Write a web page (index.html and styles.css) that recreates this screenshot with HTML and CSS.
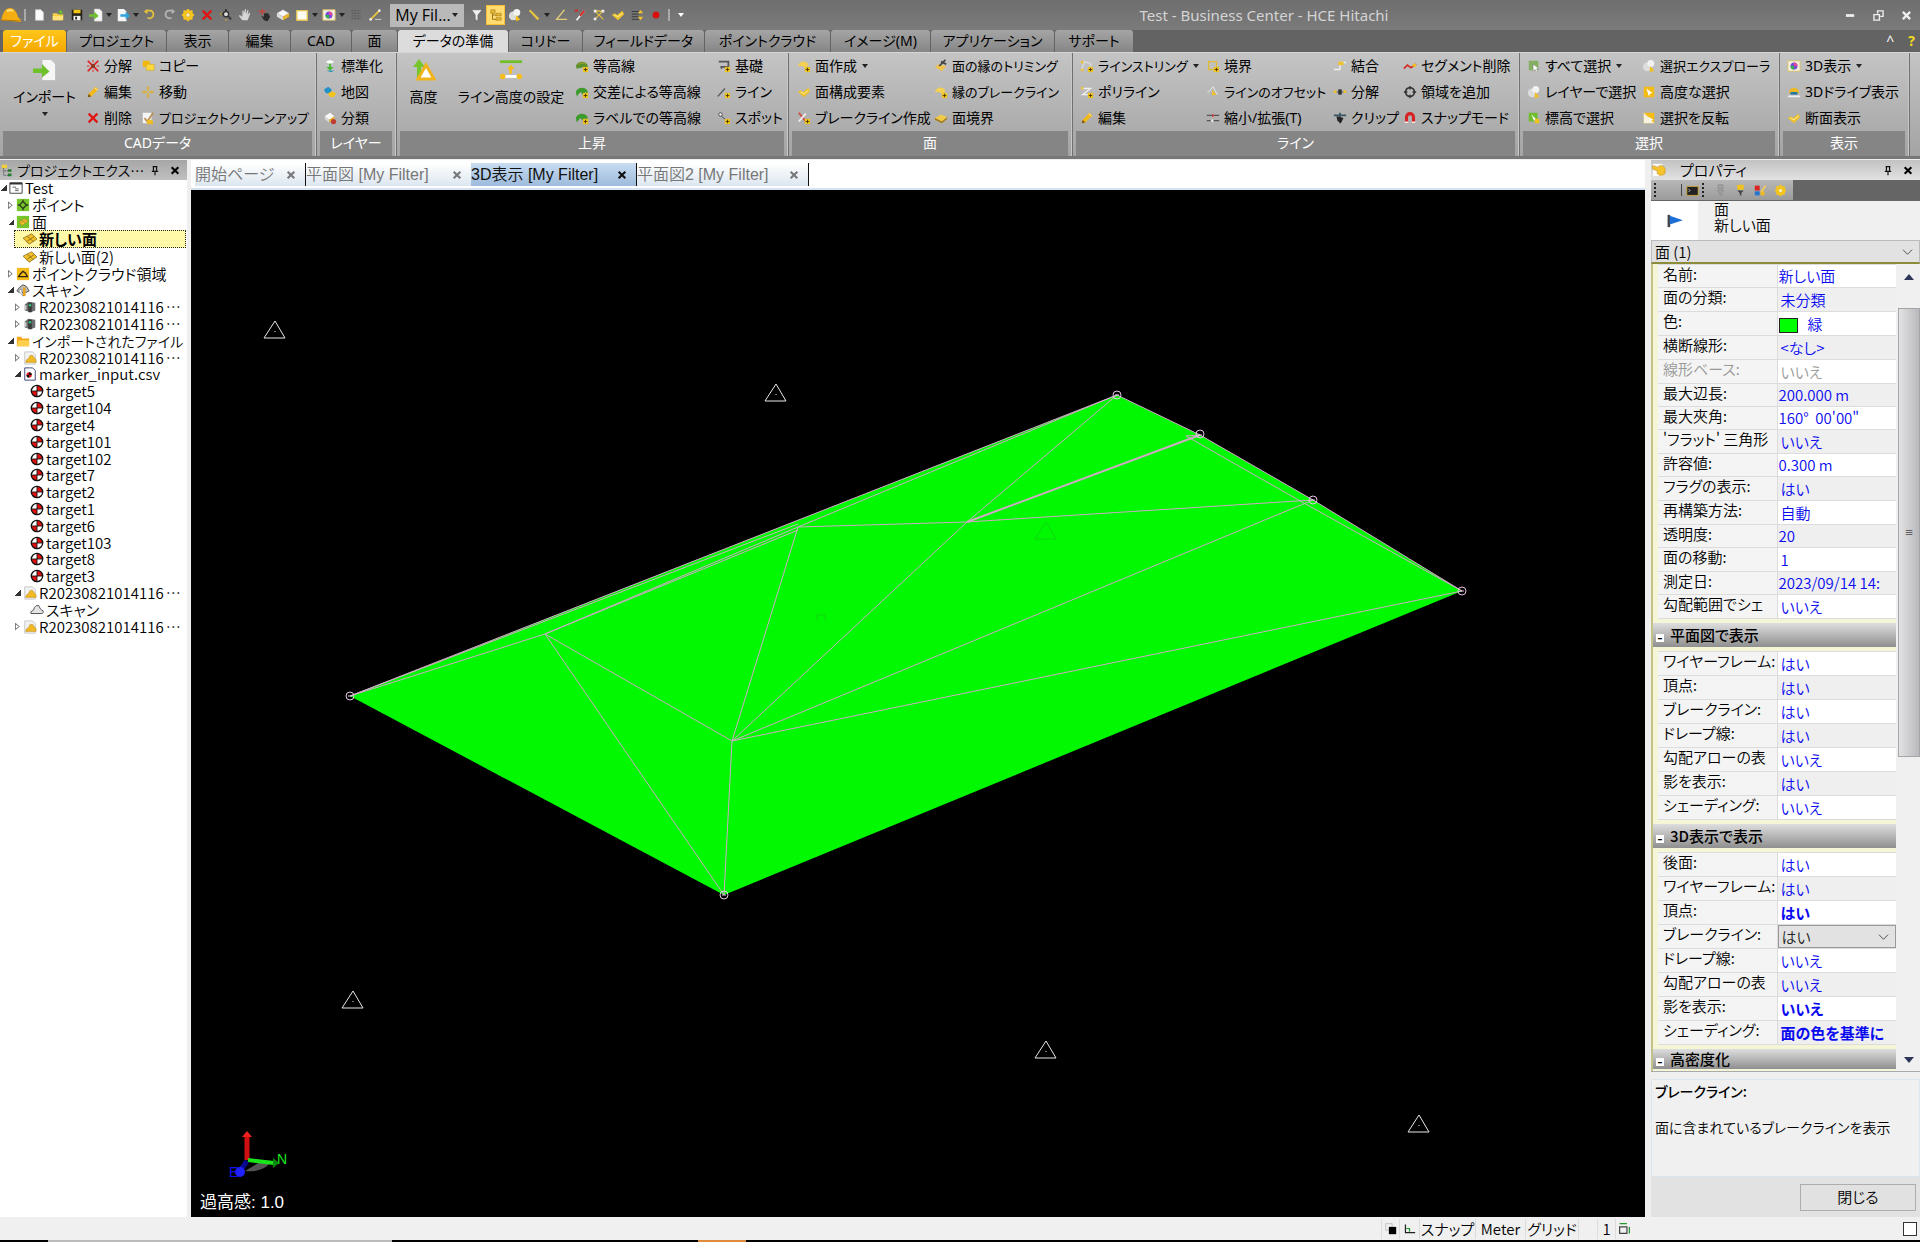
FILE: index.html
```html
<!DOCTYPE html>
<html lang="ja">
<head>
  <meta charset="UTF-8" />
  <meta name="viewport" content="width=device-width, initial-scale=1.0" />
  <title>Test - Business Center - HCE Hitachi</title>
  <link rel="stylesheet" href="styles.css">
</head>
<body>
  <svg class="sprite" aria-hidden="true">
    <symbol id="helmet" viewBox="0 0 20 14"><path d="M1 10C2 4 5 0 9 0s7 4 8 9l3 3v2L0 12z" fill="#f5ae12"/><path d="M6 3c2-1 4-1 6 0" stroke="#ffe07a" stroke-width="2" fill="none"/><path d="M0 12l20 1" stroke="#b97900"/></symbol>
    <symbol id="new" viewBox="0 0 16 16"><path d="M4 2h6l3 3v9H4z" fill="#fafafa" stroke="#ccc"/></symbol>
    <symbol id="open" viewBox="0 0 16 16"><path d="M2 6h5l1 1h6v7H2z" fill="#f6cf45"/><path d="M2 9h12l-1 5H2z" fill="#ffe27a"/><path d="M8 5l3-3 3 3h-2v3h-2V5z" fill="#6bbf2a"/></symbol>
    <symbol id="save" viewBox="0 0 16 16"><path d="M2 2h12v12H2z" fill="#26231c"/><path d="M4 2h8v4H4z" fill="#f3c614"/><path d="M4 9h8v5H4z" fill="#eee"/><path d="M6 10h2v3H6z" fill="#222"/></symbol>
    <symbol id="import" viewBox="0 0 16 16"><path d="M6 1h6l3 3v11H6z" fill="#f6f6f6" stroke="#bbb" stroke-width=".5"/><path d="M0 7h6V4l5 5-5 4v-3H0z" fill="#6fc12b"/></symbol>
    <symbol id="export" viewBox="0 0 16 16"><path d="M2 1h7l3 3v11H2z" fill="#f6f6f6"/><path d="M5 7h6V4l5 5-5 4v-3H5z" fill="#2fa3dd"/></symbol>
    <symbol id="undo" viewBox="0 0 16 16"><path d="M3 3h6a4.500 4.500 0 1 1-4 8" fill="none" stroke="#e6c13c" stroke-width="2"/><path d="M1 4l4-3v6z" fill="#e6c13c"/></symbol>
    <symbol id="redo" viewBox="0 0 16 16"><path d="M13 3H7a4.500 4.500 0 1 0 4 8" fill="none" stroke="#b4b4b4" stroke-width="2"/><path d="M15 4l-4-3v6z" fill="#b4b4b4"/></symbol>
    <symbol id="gear" viewBox="0 0 16 16"><circle cx="8" cy="8" r="4" fill="none" stroke="#f5c51d" stroke-width="4"/><path d="M8 1v3M8 12v3M1 8h3M12 8h3M3 3l2 2M11 11l2 2M13 3l-2 2M3 13l2-2" stroke="#f5c51d" stroke-width="2"/><circle cx="8" cy="8" r="2" fill="#fff3b5"/></symbol>
    <symbol id="cross" viewBox="0 0 16 16"><path d="M3 3l10 10M13 3L3 13" stroke="#e11313" stroke-width="2.500"/></symbol>
    <symbol id="zoomsel" viewBox="0 0 16 16"><circle cx="8" cy="7" r="3" fill="#ddd" stroke="#333" stroke-width="1.500"/><path d="M10 9l4 4M2 7h3M8 1v3" stroke="#333" stroke-width="2"/><path d="M3 8l-2-1 2-2M7 13l1 2 1-2" fill="#f5c51d"/></symbol>
    <symbol id="hand" viewBox="0 0 16 16"><path d="M5 14l-4-5 1-1 3 2V3h1.500v4L8 1h1v6l2-5 1 1-1 5 2-3 1 1-3 8z" fill="#d6d6d6"/></symbol>
    <symbol id="orbit" viewBox="0 0 16 16"><path d="M2 4h8M6 1v7" stroke="#c9423a" stroke-width="1.500"/><path d="M8 14l-3-5 3 1V6h5l2 4-3 5z" fill="#2c2c2c"/></symbol>
    <symbol id="layer" viewBox="0 0 16 16"><path d="M8 2l7 4-7 4-7-4z" fill="#f8f8f8" stroke="#aaa" stroke-width=".5"/><path d="M1 6l7 4v4l-7-4z" fill="#ddd"/><path d="M15 6v4l-7 4v-4z" fill="#eab526"/></symbol>
    <symbol id="viewbox" viewBox="0 0 16 16"><path d="M2 3h12v11H2z" fill="#fdfdf4" stroke="#e0c352" stroke-width="1.500"/></symbol>
    <symbol id="view3d" viewBox="0 0 16 16"><path d="M1 2h14v12H1z" fill="#f3efdf" stroke="#d8bf66"/><circle cx="8" cy="8" r="4" fill="#7a4bd6"/><path d="M8 4a4 4 0 0 1 4 4H8z" fill="#e04b9a"/><path d="M8 12a4 4 0 0 1-4-4h4z" fill="#30b34a"/></symbol>
    <symbol id="grid" viewBox="0 0 16 16"><path d="M3 3h10M3 6h10M3 9h10M3 12h10" stroke="#5c5c5c" stroke-width="1.500" stroke-dasharray="2 1"/></symbol>
    <symbol id="measure" viewBox="0 0 16 16"><path d="M3 13L13 3" stroke="#e9c73d" stroke-width="2"/><path d="M8 13h7" stroke="#ddd"/><circle cx="3" cy="13" r="1.500" fill="#eee"/><circle cx="13" cy="3" r="1.500" fill="#eee"/></symbol>
    <symbol id="funnel" viewBox="0 0 16 16"><path d="M2 2h12L9 8v7l-3-2V8z" fill="#eee" stroke="#444" stroke-width=".5"/></symbol>
    <symbol id="tree" viewBox="0 0 16 16"><path d="M2 2h5v4H2zM8 6h6v3H8zM8 11h6v3H8z" fill="#e5b631" stroke="#8b6a12" stroke-width=".5"/><path d="M4 6v7h4M4 8h4" fill="none" stroke="#8b6a12"/></symbol>
    <symbol id="pick" viewBox="0 0 16 16"><circle cx="6" cy="9" r="5" fill="#ddd"/><circle cx="10" cy="5" r="4" fill="#f2f2f2"/><path d="M9 8l5 5-2 1-3 1z" fill="#f2c01c"/></symbol>
    <symbol id="pencil" viewBox="0 0 16 16"><path d="M2 14l1-4 8-8 3 3-8 8z" fill="#f3b81b"/><path d="M2 14l1-4 3 3z" fill="#7b5518"/><path d="M10 3l3 3" stroke="#fff0b0"/></symbol>
    <symbol id="ruler" viewBox="0 0 16 16"><path d="M2 3l2-1 10 10-2 2z" fill="#e9c63e"/></symbol>
    <symbol id="angle" viewBox="0 0 16 16"><path d="M12 2L3 13h12" fill="none" stroke="#e2cc78" stroke-width="1.500"/></symbol>
    <symbol id="redline" viewBox="0 0 16 16"><path d="M4 14L13 3" stroke="#f2f2f2" stroke-width="2"/><path d="M8 9l5-6M2 3h4" stroke="#d22" stroke-width="2"/></symbol>
    <symbol id="nodes" viewBox="0 0 16 16"><path d="M3 3l10 10M13 3L3 13M4 3l8 1" stroke="#e0c040" stroke-width="1.500"/><path d="M2 2h3v3H2zM11 2h3v3h-3zM2 11h3v3H2z" fill="#eee"/></symbol>
    <symbol id="plane" viewBox="0 0 16 16"><path d="M1 8l3-2 3 2 6-5 2 4-7 7z" fill="#edc22c"/><path d="M4 8l4 2 5-4" stroke="#fff1a9" fill="none"/></symbol>
    <symbol id="listico" viewBox="0 0 16 16"><path d="M2 4h8M2 7h8M2 10h8M2 13h8" stroke="#333"/><path d="M12 2l3 4h-6zM12 14l3-4h-6z" fill="#edc22c"/></symbol>
    <symbol id="rec" viewBox="0 0 16 16"><circle cx="8" cy="8" r="4" fill="#d80f0f"/></symbol>
    <symbol id="burst" viewBox="0 0 16 16"><path d="M2 2l12 12M14 2L2 14" stroke="#df1b1b" stroke-width="2"/><path d="M8 1v14M1 8h14" stroke="#df1b1b" stroke-dasharray="3 8"/><circle cx="8" cy="8" r="2.500" fill="#8a3a20"/></symbol>
    <symbol id="copy" viewBox="0 0 16 16"><path d="M2 2h8v7H2z" fill="#f0b80e"/><path d="M6 6h9v7H6z" fill="#ffd93c" stroke="#c99710" stroke-width=".5"/></symbol>
    <symbol id="move" viewBox="0 0 16 16"><path d="M8 2v12M2 8h12" stroke="#e4b32a" stroke-width="1.500" stroke-dasharray="5 2"/><path d="M6 4l2-3 2 3zM6 12l2 3 2-3zM4 6L1 8l3 2zM12 6l3 2-3 2z" fill="#d9ae39"/></symbol>
    <symbol id="clean" viewBox="0 0 16 16"><path d="M2 2h10v12H2z" fill="#f5f5f5"/><path d="M4 8l3 4 7-10" stroke="#b98f57" stroke-width="2" fill="none"/><path d="M7 10h6l1 5H7z" fill="#efbd28"/></symbol>
    <symbol id="std" viewBox="0 0 16 16"><path d="M3 3l5-2 5 2-5 3z" fill="#fff"/><path d="M7 5h2v4h3l-4 4-4-4h3z" fill="#47b52b"/><path d="M4 13h9l-4 2z" fill="#1d98b4"/></symbol>
    <symbol id="map" viewBox="0 0 16 16"><path d="M1 5l5-3 4 3-2 5-5-1z" fill="#2492c9"/><path d="M6 9l5-2 4 3-3 4-5-1z" fill="#f2c21d"/></symbol>
    <symbol id="class" viewBox="0 0 16 16"><path d="M2 6l6-4 5 4-6 4z" fill="#fafafa"/><path d="M2 6l5 4v3L2 9z" fill="#d8d8d8"/><path d="M7 10l6-4v3l-6 4z" fill="#e3b42e"/><circle cx="12" cy="12" r="3" fill="#bd3b33"/></symbol>
    <symbol id="elev" viewBox="0 0 24 24"><path d="M7 1l6 8H9v10H5V9H1z" fill="#76c52b"/><path d="M14 7l8 14H6z" fill="#fff" stroke="#f0b31c" stroke-width="3"/></symbol>
    <symbol id="lineelev" viewBox="0 0 26 24"><path d="M1 3h24" stroke="#72bf2a" stroke-width="3"/><path d="M13 6l4 5h-3v5h-3v-5H9z" fill="#f6bc1e"/><path d="M4 19h18" stroke="#fff" stroke-width="3"/><circle cx="4" cy="19" r="3" fill="#f6bc1e"/><circle cx="22" cy="19" r="3" fill="#f6bc1e"/></symbol>
    <symbol id="contour" viewBox="0 0 16 16"><path d="M1 8c1-5 9-7 13-2l1 5-4-2-4 1-5 1z" fill="#58912b"/><path d="M3 7c3-3 7-3 9-1" stroke="#c0a23a" fill="none"/><path d="M9 9h6v6H9z" fill="#f0c31c"/><path d="M12 10v4M10 12h4" stroke="#463508"/></symbol>
    <symbol id="contour2" viewBox="0 0 16 16"><path d="M1 8c1-5 9-7 13-2l1 5-3-3-3 3-3-3-4 5z" fill="#3c9a2a"/><path d="M9 9h6v6H9z" fill="#f0c31c"/><path d="M12 10v4M10 12h4" stroke="#463508"/></symbol>
    <symbol id="base" viewBox="0 0 16 16"><path d="M2 3h11v6H5v2" fill="none" stroke="#555" stroke-width="2"/><path d="M9 9h6v6H9z" fill="#f0c31c"/><path d="M12 10v4M10 12h4" stroke="#463508"/></symbol>
    <symbol id="lineadd" viewBox="0 0 16 16"><path d="M1 13l8-9" stroke="#555" stroke-width="1.500"/><path d="M9 9h6v6H9z" fill="#f0c31c"/><path d="M12 10v4M10 12h4" stroke="#463508"/></symbol>
    <symbol id="spot" viewBox="0 0 16 16"><circle cx="4" cy="4" r="2" fill="#eee" stroke="#444"/><path d="M5 6l5 4" stroke="#444"/><path d="M9 9h6v6H9z" fill="#f0c31c"/><path d="M12 10v4M10 12h4" stroke="#463508"/></symbol>
    <symbol id="surfadd" viewBox="0 0 16 16"><path d="M1 8c2-6 8-7 12-2l-3 5-4-3z" fill="#f3cf52"/><path d="M9 9h6v6H9z" fill="#f0c31c"/><path d="M12 10v4M10 12h4" stroke="#463508"/></symbol>
    <symbol id="brk" viewBox="0 0 16 16"><path d="M2 2l9 11" stroke="#d24b40" stroke-width="2"/><path d="M2 12l8-9" stroke="#f2f2f2" stroke-width="2"/><path d="M9 9h6v6H9z" fill="#f0c31c"/><path d="M12 10v4M10 12h4" stroke="#463508"/></symbol>
    <symbol id="trim" viewBox="0 0 16 16"><path d="M1 9l4-3 9 2-5 6z" fill="#edc24d"/><path d="M6 8l7-7M8 3l6 3" stroke="#444" stroke-width="2"/></symbol>
    <symbol id="slab" viewBox="0 0 16 16"><path d="M1 8l7-4 7 3-6 5z" fill="#f0cb45"/><path d="M1 8l8 4 6-5v2l-6 5-8-4z" fill="#a37c14"/></symbol>
    <symbol id="linestr" viewBox="0 0 16 16"><path d="M2 12l3-9 7 2v6" fill="none" stroke="#ddd" stroke-width="1.500"/><path d="M1 2h3v3H1zM1 11h3v3H1z" fill="#e9c340"/><path d="M9 9h6v6H9z" fill="#f0c31c"/><path d="M12 10v4M10 12h4" stroke="#463508"/></symbol>
    <symbol id="polyl" viewBox="0 0 16 16"><path d="M2 4h10L3 11h7" fill="none" stroke="#eee" stroke-width="1.500"/><path d="M1 2h3v3H1z" fill="#e9c340"/><path d="M9 9h6v6H9z" fill="#f0c31c"/><path d="M12 10v4M10 12h4" stroke="#463508"/></symbol>
    <symbol id="bound" viewBox="0 0 16 16"><path d="M3 3h9v9H3z" fill="none" stroke="#e0bb38" stroke-width="1.500"/><path d="M9 9h6v6H9z" fill="#f0c31c"/><path d="M12 10v4M10 12h4" stroke="#463508"/></symbol>
    <symbol id="offset" viewBox="0 0 16 16"><path d="M2 9l6-7 5 9" fill="none" stroke="#eee"/><path d="M7 5l5 6-5 1z" fill="#edc22c"/></symbol>
    <symbol id="scale" viewBox="0 0 16 16"><path d="M1 5h6M9 5h6M1 11h6M9 11h6" stroke="#555" stroke-width="1.500"/><path d="M7 3l3 2-3 2z" fill="#c33"/><path d="M8 9l-3 2 3 2z" fill="#eee"/></symbol>
    <symbol id="join" viewBox="0 0 16 16"><path d="M1 12h7V4h7" fill="none" stroke="#eee" stroke-width="1.500"/><path d="M6 3h6v4H6z" fill="#edc22c"/></symbol>
    <symbol id="explode" viewBox="0 0 16 16"><path d="M1 8h14" stroke="#777" stroke-width="1.500"/><path d="M6 5h4v6H6z" fill="#333"/><path d="M1 6h3v3H1zM12 6h3v3h-3z" fill="#edc22c"/></symbol>
    <symbol id="clip" viewBox="0 0 16 16"><path d="M1 5h14M8 2v12" stroke="#3a5560" stroke-width="2"/><path d="M4 6l8 2-3 6-4-3z" fill="#222"/></symbol>
    <symbol id="segdel" viewBox="0 0 16 16"><path d="M1 11l4-4 4 3 6-4" fill="none" stroke="#d4302a" stroke-width="2"/><circle cx="13" cy="7" r="2" fill="#f0c31c"/></symbol>
    <symbol id="region" viewBox="0 0 16 16"><circle cx="8" cy="8" r="5" fill="none" stroke="#333" stroke-width="2"/><path d="M8 1v4M8 11v4M1 8h4M11 8h4" stroke="#333" stroke-width="1.500"/></symbol>
    <symbol id="magnet" viewBox="0 0 16 16"><path d="M4 14V7a4 4 0 0 1 8 0v7" fill="none" stroke="#d62222" stroke-width="3.500"/><path d="M2 12h4v2H2zM10 12h4v2h-4z" fill="#eee"/></symbol>
    <symbol id="selall" viewBox="0 0 16 16"><path d="M2 2h11v11H2z" fill="#86b061"/><path d="M7 6v8l2-2 2 3 1-1-1-3h3z" fill="#fff" stroke="#777" stroke-width=".5"/></symbol>
    <symbol id="selgreen" viewBox="0 0 16 16"><path d="M2 2h10v10H2z" fill="#6fbc2f"/><path d="M5 4l6 6-3 1z" fill="#fff"/><path d="M9 9h5v5H9z" fill="#f0c31c"/></symbol>
    <symbol id="seladv" viewBox="0 0 16 16"><path d="M2 2h12v12H2z" fill="#f3bd16"/><path d="M5 4l7 5-3 1-1 3z" fill="#fff"/></symbol>
    <symbol id="selinv" viewBox="0 0 16 16"><path d="M2 2h12v12H2z" fill="#f3bd16"/><path d="M2 14V2l12 12z" fill="#f7f2df"/><path d="M6 6l7 4-3 1z" fill="#fff"/></symbol>
    <symbol id="drive" viewBox="0 0 16 16"><path d="M3 6c1-4 9-4 10 0l1 3H2z" fill="#edb927"/><path d="M4 8h8v3H4z" fill="#2677a0"/><path d="M1 13h14" stroke="#eee" stroke-width="2"/></symbol>
    <symbol id="explorer" viewBox="0 0 16 16"><path d="M1 2h6v4H1z" fill="#f2cd3c"/><path d="M3 6v8h5M3 9h5" stroke="#333" fill="none" stroke-dasharray="1 1"/><path d="M8 7h4v3H8zM8 12h4v3H8z" fill="#267a2c"/></symbol>
    <symbol id="proj" viewBox="0 0 16 16"><path d="M1 2h14v12H1z" fill="#fff" stroke="#333"/><path d="M1 2h14v2H1z" fill="#333"/><path d="M4 7h4M7 9h4M7 11h4" stroke="#555"/></symbol>
    <symbol id="point" viewBox="0 0 16 16"><path d="M1 1h14v14H1z" fill="#76c52b"/><path d="M8 4l4 4-4 4-4-4zM8 2v3M8 11v3M2 8h3M11 8h3" fill="none" stroke="#2c3b1c" stroke-width="1.500"/></symbol>
    <symbol id="surfg" viewBox="0 0 16 16"><path d="M1 1h14v14H1z" fill="#76c52b"/><path d="M3 8l7-4 4 3-7 5z" fill="#f2c22f" stroke="#8d6b12" stroke-width=".5"/><path d="M6 6l5 3M5 9l6-3" stroke="#8d6b12" stroke-width=".5"/></symbol>
    <symbol id="surf" viewBox="0 0 16 16"><path d="M0 7l10-5 6 6-9 6z" fill="#f0c02c" stroke="#7e6012" stroke-width=".8"/><path d="M5 5l7 6M4 11l9-6" stroke="#7e6012" stroke-width=".8"/></symbol>
    <symbol id="pcr" viewBox="0 0 16 16"><path d="M1 1h14v14H1z" fill="#f5bd1b"/><path d="M3 11l2-3 3-3 3 2 2 4z" fill="none" stroke="#2c2410" stroke-width="1.500"/></symbol>
    <symbol id="cloudscan" viewBox="0 0 16 16"><path d="M1 9l3-4 4-3 4 2 3 5-4 2H4z" fill="#bdbdbd" stroke="#444"/><path d="M8 5h3v10H8z" fill="#e6a520"/><path d="M6 7l-3 2 5 6z" fill="#fff" stroke="#555" stroke-width=".5"/></symbol>
    <symbol id="station" viewBox="0 0 16 16"><path d="M2 5l4-3 8 1v9l-5 2-7-2z" fill="#6c6c6c"/><path d="M6 3h4v11H6z" fill="#3a3a3a"/><path d="M3 6v5" stroke="#ccc" stroke-width="2"/><circle cx="8" cy="6" r="1.500" fill="#2dbf7c"/></symbol>
    <symbol id="folder" viewBox="0 0 16 16"><path d="M1 3h5l1 2h8v9H1z" fill="#f0a818"/><path d="M3 7h12v7H1z" fill="#ffcf4d"/></symbol>
    <symbol id="cloudfile" viewBox="0 0 16 16"><path d="M2 1h9l3 3v11H2z" fill="#f2f2f2" stroke="#c4c4c4"/><path d="M3 13l1-3 2-1 2-4h3l2 3 2 2v3z" fill="#f1b923" stroke="#a97d13" stroke-width=".5"/></symbol>
    <symbol id="csv" viewBox="0 0 16 16"><path d="M2 1h9l3 3v11H2z" fill="#fff" stroke="#29386e"/><circle cx="7" cy="9" r="3" fill="#d11"/><path d="M7 6v3h3A3 3 0 0 0 7 6M7 12V9H4a3 3 0 0 0 3 3" fill="#111"/></symbol>
    <symbol id="target" viewBox="0 0 16 16"><circle cx="8" cy="8" r="6.500" fill="#fff"/><path d="M8 8V1.500A6.500 6.500 0 0 1 14.500 8zM8 8v6.500A6.500 6.500 0 0 1 1.500 8z" fill="#e01010"/><path d="M8 1v14M1 8h14" stroke="#111"/><circle cx="8" cy="8" r="6.500" fill="none" stroke="#111" stroke-width="1.500"/></symbol>
    <symbol id="cloud" viewBox="0 0 16 16"><path d="M1 12v-2l3-2 1-3 2-2h3l2 4 3 2v2l-1 1z" fill="#e4e4e4" stroke="#444"/></symbol>
    <symbol id="pointhand" viewBox="0 0 16 16"><path d="M1 1h11v14H1z" fill="#fafafa"/><path d="M0 4l2-1 5 2 1-2h4l3 3v6l-3 2H8l-2-2V9L1 7z" fill="#f6c32c" stroke="#b07b10" stroke-width=".5"/></symbol>
    <symbol id="console" viewBox="0 0 16 16"><path d="M1 3h14v11H1z" fill="#222" stroke="#d8ae2d"/><path d="M3 6l2 2-2 2" stroke="#ddd" fill="none"/></symbol>
    <symbol id="filtg" viewBox="0 0 16 16"><path d="M5 1h6v5H5zM4 8h8l-3 3v4l-2-2v-2z" fill="#a2a2a2" stroke="#8a8a8a"/></symbol>
    <symbol id="filty" viewBox="0 0 16 16"><path d="M4 1h8v6H4z" fill="#f2c31e"/><path d="M4 8h8l-3 3v4l-2-2v-2z" fill="#444"/></symbol>
    <symbol id="cat" viewBox="0 0 16 16"><path d="M1 2h6v6H1z" fill="#d22"/><path d="M1 9h6v5H1z" fill="#2376cf"/><path d="M8 9h5v5H8z" fill="#e9ba24"/><path d="M8 9l6-8 1 2-5 7z" fill="#f4cb55"/></symbol>
    <symbol id="flag" viewBox="0 0 20 16"><path d="M3 1v14" stroke="#444" stroke-width="3"/><path d="M4 2l15 5-15 5z" fill="#1d6fd8"/></symbol>
    <symbol id="pin" viewBox="0 0 12 14"><path d="M3 2h6M4 2v6M8 2v6M2 8h8M6 8v5" stroke="#111" stroke-width="1.500" fill="none"/></symbol>
    <symbol id="x" viewBox="0 0 12 12"><path d="M2 2l8 8M10 2l-8 8" stroke="currentColor" stroke-width="2.500"/></symbol>
  </svg>

  <header class="titlebar">
    <div class="quick">
      <svg class="logo"><use href="#helmet"/></svg>
      <span class="sep"></span>
      <button aria-label="新規"><svg><use href="#new"/></svg></button>
      <button aria-label="開く"><svg><use href="#open"/></svg></button>
      <button aria-label="保存"><svg><use href="#save"/></svg></button>
      <button aria-label="インポート"><svg><use href="#import"/></svg></button><i class="caret"></i>
      <button aria-label="エクスポート"><svg><use href="#export"/></svg></button><i class="caret"></i>
      <button aria-label="元に戻す"><svg><use href="#undo"/></svg></button>
      <button aria-label="やり直し"><svg><use href="#redo"/></svg></button>
      <button aria-label="設定"><svg><use href="#gear"/></svg></button>
      <button aria-label="削除"><svg><use href="#cross"/></svg></button>
      <button aria-label="ズーム"><svg><use href="#zoomsel"/></svg></button>
      <button aria-label="移動"><svg><use href="#hand"/></svg></button>
      <button aria-label="回転"><svg><use href="#orbit"/></svg></button>
      <button aria-label="レイヤー"><svg><use href="#layer"/></svg></button>
      <button aria-label="平面図"><svg><use href="#viewbox"/></svg></button><i class="caret"></i>
      <button aria-label="3D表示"><svg><use href="#view3d"/></svg></button><i class="caret"></i>
      <button aria-label="グリッド"><svg><use href="#grid"/></svg></button>
      <button aria-label="計測"><svg><use href="#measure"/></svg></button>
      <button class="filter-box">My Fil...<i class="caret"></i></button>
      <button aria-label="フィルタ"><svg><use href="#funnel"/></svg></button>
      <button class="on" aria-label="エクスプローラ"><svg><use href="#tree"/></svg></button>
      <button aria-label="選択"><svg><use href="#pick"/></svg></button>
      <button aria-label="定規"><svg><use href="#ruler"/></svg></button><i class="caret"></i>
      <button aria-label="角度"><svg><use href="#angle"/></svg></button>
      <button aria-label="線"><svg><use href="#redline"/></svg></button>
      <button aria-label="ノード"><svg><use href="#nodes"/></svg></button>
      <button aria-label="面"><svg><use href="#plane"/></svg></button>
      <button aria-label="リスト"><svg><use href="#listico"/></svg></button>
      <button aria-label="記録"><svg><use href="#rec"/></svg></button>
      <span class="sep"></span><i class="caret light"></i>
    </div>
    <div class="title">Test - Business Center - HCE Hitachi</div>
    <div class="window-buttons">
      <button aria-label="最小化"><svg viewBox="0 0 12 12"><path d="M1 6h9" stroke="#eee" stroke-width="3"/></svg></button>
      <button aria-label="元のサイズ"><svg viewBox="0 0 12 12"><path d="M1 5h6v6H1zM5 4V1h6v6H8" fill="none" stroke="#eee" stroke-width="1.500"/></svg></button>
      <button aria-label="終了"><svg><use href="#x"/></svg></button>
    </div>
  </header>

  <nav class="tabs">
    <button class="file">ファイル</button>
    <button>プロジェクト</button>
    <button>表示</button>
    <button>編集</button>
    <button>CAD</button>
    <button>面</button>
    <button class="active">データの準備</button>
    <button>コリドー</button>
    <button>フィールドデータ</button>
    <button>ポイントクラウド</button>
    <button>イメージ(M)</button>
    <button>アプリケーション</button>
    <button>サポート</button>
    <div class="help"><span>^</span><b>?</b></div>
  </nav>

  <section class="ribbon">
    <div class="group g-cad">
      <div class="tools">
        <button class="big"><svg><use href="#import"/></svg>インポート<i class="caret"></i></button>
        <div class="col">
          <button><svg><use href="#burst"/></svg>分解</button>
          <button><svg><use href="#pencil"/></svg>編集</button>
          <button><svg><use href="#cross"/></svg>削除</button>
        </div>
        <div class="col">
          <button><svg><use href="#copy"/></svg>コピー</button>
          <button><svg><use href="#move"/></svg>移動</button>
          <button class="long"><svg><use href="#clean"/></svg>プロジェクトクリーンアップ</button>
        </div>
      </div>
      <h2>CADデータ</h2>
    </div>
    <div class="group g-layer">
      <div class="tools">
        <div class="col">
          <button><svg><use href="#std"/></svg>標準化</button>
          <button><svg><use href="#map"/></svg>地図</button>
          <button><svg><use href="#class"/></svg>分類</button>
        </div>
      </div>
      <h2>レイヤー</h2>
    </div>
    <div class="group g-elev">
      <div class="tools">
        <button class="big"><svg><use href="#elev"/></svg>高度</button>
        <button class="big"><svg><use href="#lineelev"/></svg>ライン高度の設定</button>
        <div class="col">
          <button><svg><use href="#contour"/></svg>等高線</button>
          <button><svg><use href="#contour2"/></svg>交差による等高線</button>
          <button><svg><use href="#contour2"/></svg>ラベルでの等高線</button>
        </div>
        <div class="col">
          <button><svg><use href="#base"/></svg>基礎</button>
          <button><svg><use href="#lineadd"/></svg>ライン</button>
          <button><svg><use href="#spot"/></svg>スポット</button>
        </div>
      </div>
      <h2>上昇</h2>
    </div>
    <div class="group g-surf">
      <div class="tools">
        <div class="col">
          <button><svg><use href="#surfadd"/></svg>面作成<i class="caret"></i></button>
          <button><svg><use href="#plane"/></svg>面構成要素</button>
          <button><svg><use href="#brk"/></svg>ブレークライン作成</button>
        </div>
        <div class="col">
          <button class="long"><svg><use href="#trim"/></svg>面の縁のトリミング</button>
          <button class="long"><svg><use href="#surfadd"/></svg>縁のブレークライン</button>
          <button><svg><use href="#slab"/></svg>面境界</button>
        </div>
      </div>
      <h2>面</h2>
    </div>
    <div class="group g-line">
      <div class="tools">
        <div class="col">
          <button class="long"><svg><use href="#linestr"/></svg>ラインストリング<i class="caret"></i></button>
          <button><svg><use href="#polyl"/></svg>ポリライン</button>
          <button><svg><use href="#pencil"/></svg>編集</button>
        </div>
        <div class="col">
          <button><svg><use href="#bound"/></svg>境界</button>
          <button class="long"><svg><use href="#offset"/></svg>ラインのオフセット</button>
          <button><svg><use href="#scale"/></svg>縮小/拡張(T)</button>
        </div>
        <div class="col">
          <button><svg><use href="#join"/></svg>結合</button>
          <button><svg><use href="#explode"/></svg>分解</button>
          <button><svg><use href="#clip"/></svg>クリップ</button>
        </div>
        <div class="col">
          <button><svg><use href="#segdel"/></svg>セグメント削除</button>
          <button><svg><use href="#region"/></svg>領域を追加</button>
          <button><svg><use href="#magnet"/></svg>スナップモード</button>
        </div>
      </div>
      <h2>ライン</h2>
    </div>
    <div class="group g-select">
      <div class="tools">
        <div class="col">
          <button><svg><use href="#selall"/></svg>すべて選択<i class="caret"></i></button>
          <button><svg><use href="#pick"/></svg>レイヤーで選択</button>
          <button><svg><use href="#selgreen"/></svg>標高で選択</button>
        </div>
        <div class="col">
          <button class="long"><svg><use href="#pick"/></svg>選択エクスプローラ</button>
          <button><svg><use href="#seladv"/></svg>高度な選択</button>
          <button><svg><use href="#selinv"/></svg>選択を反転</button>
        </div>
      </div>
      <h2>選択</h2>
    </div>
    <div class="group g-view">
      <div class="tools">
        <div class="col">
          <button><svg><use href="#view3d"/></svg>3D表示<i class="caret"></i></button>
          <button><svg><use href="#drive"/></svg>3Dドライブ表示</button>
          <button><svg><use href="#plane"/></svg>断面表示</button>
        </div>
      </div>
      <h2>表示</h2>
    </div>
  </section>

  <main class="workspace">
    <aside class="explorer">
      <div class="panel-head">
        <svg class="ico"><use href="#explorer"/></svg>
        <span class="panel-title">プロジェクトエクス<span class="more">…</span></span>
        <button aria-label="固定"><svg><use href="#pin"/></svg></button>
        <button aria-label="閉じる"><svg><use href="#x"/></svg></button>
      </div>
      <ul class="tree">
        <li class="l0 open"><svg><use href="#proj"/></svg>Test</li>
        <li class="l1 shut"><svg><use href="#point"/></svg>ポイント</li>
        <li class="l1 open"><svg><use href="#surfg"/></svg>面</li>
        <li class="l2 selected"><svg><use href="#surf"/></svg>新しい面</li>
        <li class="l2"><svg><use href="#surf"/></svg>新しい面(2)</li>
        <li class="l1 shut"><svg><use href="#pcr"/></svg>ポイントクラウド領域</li>
        <li class="l1 open"><svg><use href="#cloudscan"/></svg>スキャン</li>
        <li class="l2 shut"><svg><use href="#station"/></svg>R20230821014116<span class="more">…</span></li>
        <li class="l2 shut"><svg><use href="#station"/></svg>R20230821014116<span class="more">…</span></li>
        <li class="l1 open long"><svg><use href="#folder"/></svg>インポートされたファイル</li>
        <li class="l2 shut"><svg><use href="#cloudfile"/></svg>R20230821014116<span class="more">…</span></li>
        <li class="l2 open"><svg><use href="#csv"/></svg>marker_input.csv</li>
        <li class="l3"><svg><use href="#target"/></svg>target5</li>
        <li class="l3"><svg><use href="#target"/></svg>target104</li>
        <li class="l3"><svg><use href="#target"/></svg>target4</li>
        <li class="l3"><svg><use href="#target"/></svg>target101</li>
        <li class="l3"><svg><use href="#target"/></svg>target102</li>
        <li class="l3"><svg><use href="#target"/></svg>target7</li>
        <li class="l3"><svg><use href="#target"/></svg>target2</li>
        <li class="l3"><svg><use href="#target"/></svg>target1</li>
        <li class="l3"><svg><use href="#target"/></svg>target6</li>
        <li class="l3"><svg><use href="#target"/></svg>target103</li>
        <li class="l3"><svg><use href="#target"/></svg>target8</li>
        <li class="l3"><svg><use href="#target"/></svg>target3</li>
        <li class="l2 open"><svg><use href="#cloudfile"/></svg>R20230821014116<span class="more">…</span></li>
        <li class="l3"><svg><use href="#cloud"/></svg>スキャン</li>
        <li class="l2 shut"><svg><use href="#cloudfile"/></svg>R20230821014116<span class="more">…</span></li>
      </ul>
    </aside>

    <section class="documents">
      <div class="doc-tabs">
        <button class="w-start">開始ページ<svg><use href="#x"/></svg></button>
        <button class="w-plan">平面図 [My Filter]<svg><use href="#x"/></svg></button>
        <button class="w-3d active">3D表示 [My Filter]<svg><use href="#x"/></svg></button>
        <button class="w-plan2">平面図2 [My Filter]<svg><use href="#x"/></svg></button>
      </div>
      <svg class="canvas" viewBox="191 190 1454 1027">
        <path d="M350 696L1117 395L1200 435L1313 500L1462 591L724 895z" fill="#00f900"/>
        <g class="wire">
          <path d="M350 696L1117 395L1200 435L1313 500L1462 591"/>
          <path d="M350 696L545 634L798 527L1117 395"/>
          <path d="M350 696L798 524"/>
          <path d="M545 634L798 530"/>
          <path d="M798 527L967 522L1313 500"/>
          <path d="M1117 395L967 522L732 741"/>
          <path class="thick" d="M967 522L1200 435"/>
          <path d="M1200 435L1186 436L1302 502L1462 591"/>
          <path d="M545 634L732 741L798 527"/>
          <path d="M1313 500L732 741L1462 591"/>
          <path d="M545 634L724 895L732 741"/>
        </g>
        <g class="vertex">
          <circle cx="350" cy="696" r="4"/><circle cx="1117" cy="395" r="4"/><circle cx="1200" cy="434" r="4"/>
          <circle cx="1313" cy="500" r="4"/><circle cx="1462" cy="591" r="4"/><circle cx="724" cy="895" r="4"/>
          <path d="M348 696h4M1115 395h4M1198 435h4M1311 500h4M1460 591h4M722 895h4"/>
        </g>
        <g class="marker">
          <path d="M275 321l10 17h-21zM275 331v1"/>
          <path d="M776 384l10 17h-21zM776 394v1"/>
          <path d="M353 991l10 17h-21zM353 1001v1"/>
          <path d="M1046 1041l10 17h-21zM1046 1051v1"/>
          <path d="M1419 1115l10 17h-21zM1419 1125v1"/>
        </g>
        <path class="faint" d="M1046 522l10 17h-21zM817 621v-6h8v6"/>
        <path d="M245 1171c10 1 19-1 25-8l-10-1" fill="#555"/>
        <path d="M247 1160v-23" stroke="#d01010" stroke-width="5"/><path d="M242 1137l5-6 5 6z" fill="#f02020"/>
        <path d="M248 1160l26 3" stroke="#19e619" stroke-width="4"/><path d="M273 1158l6 5-6 5z" fill="#0c8a0c"/>
        <path d="M247 1161l-7 10" stroke="#0a0a90" stroke-width="5"/><circle cx="240" cy="1172" r="5" fill="#2020ff"/>
        <text class="axis" x="277" y="1164" fill="#19e619">N</text>
        <text class="axis" x="229" y="1177" fill="#1010f0">E</text>
        <text class="scale" x="200" y="1208">過高感: 1.0</text>
      </svg>
    </section>

    <aside class="properties">
      <div class="panel-head light">
        <svg class="ico"><use href="#pointhand"/></svg>
        <span class="panel-title">プロパティ</span>
        <button aria-label="固定"><svg><use href="#pin"/></svg></button>
        <button aria-label="閉じる"><svg><use href="#x"/></svg></button>
      </div>
      <div class="prop-bar">
        <div class="prop-tools">
          <i class="grip"></i><i class="gap"></i>
          <button aria-label="コンソール"><svg><use href="#console"/></svg></button>
          <i class="grip"></i>
          <button aria-label="フィルタ解除"><svg><use href="#filtg"/></svg></button>
          <button aria-label="フィルタ"><svg><use href="#filty"/></svg></button>
          <button aria-label="分類"><svg><use href="#cat"/></svg></button>
          <button aria-label="オプション"><svg><use href="#gear"/></svg></button>
        </div>
      </div>
      <div class="object">
        <div class="thumb"><svg><use href="#flag"/></svg></div>
        <div>面<br>新しい面</div>
      </div>
      <select class="object-select" aria-label="オブジェクト"><option>面 (1)</option></select>
      <div class="prop-scroll">
        <div class="prop-list">
          <table>
            <tr class="short"><th>名前:</th><td>新しい面</td></tr>
            <tr><th>面の分類:</th><td>未分類</td></tr>
            <tr><th>色:</th><td><i class="swatch"></i>緑</td></tr>
            <tr><th>横断線形:</th><td>&lt;なし&gt;</td></tr>
            <tr class="off"><th>線形ベース:</th><td>いいえ</td></tr>
            <tr class="short"><th>最大辺長:</th><td>200.000 m</td></tr>
            <tr class="short"><th>最大夾角:</th><td>160°&nbsp; 00'00"</td></tr>
            <tr><th>'フラット' 三角形</th><td>いいえ</td></tr>
            <tr class="short"><th>許容値:</th><td>0.300 m</td></tr>
            <tr><th>フラグの表示:</th><td>はい</td></tr>
            <tr><th>再構築方法:</th><td>自動</td></tr>
            <tr class="short"><th>透明度:</th><td>20</td></tr>
            <tr><th>面の移動:</th><td>1</td></tr>
            <tr class="short"><th>測定日:</th><td>2023/09/14 14:</td></tr>
            <tr><th>勾配範囲でシェ</th><td>いいえ</td></tr>
          </table>
          <h3><i>-</i>平面図で表示</h3>
          <table>
            <tr><th>ワイヤーフレーム:</th><td>はい</td></tr>
            <tr><th>頂点:</th><td>はい</td></tr>
            <tr><th>ブレークライン:</th><td>はい</td></tr>
            <tr><th>ドレープ線:</th><td>はい</td></tr>
            <tr><th>勾配アローの表</th><td>いいえ</td></tr>
            <tr><th>影を表示:</th><td>はい</td></tr>
            <tr><th>シェーディング:</th><td>いいえ</td></tr>
          </table>
          <h3><i>-</i>3D表示で表示</h3>
          <table>
            <tr><th>後面:</th><td>はい</td></tr>
            <tr><th>ワイヤーフレーム:</th><td>はい</td></tr>
            <tr class="changed"><th>頂点:</th><td>はい</td></tr>
            <tr><th><label for="breakline">ブレークライン:</label></th><td class="edit"><select id="breakline"><option>はい</option></select></td></tr>
            <tr><th>ドレープ線:</th><td>いいえ</td></tr>
            <tr><th>勾配アローの表</th><td>いいえ</td></tr>
            <tr class="changed"><th>影を表示:</th><td>いいえ</td></tr>
            <tr class="changed"><th>シェーディング:</th><td>面の色を基準に</td></tr>
          </table>
          <h3 class="last"><i>-</i>高密度化</h3>
        </div>
        <div class="scrollbar"><i class="up"></i><div class="bar"><div class="handle">≡</div></div><i class="down"></i></div>
      </div>
      <div class="describe">
        <h4>ブレークライン:</h4>
        <p>面に含まれているブレークラインを表示</p>
      </div>
      <div class="actions"><button>閉じる</button></div>
    </aside>
  </main>

  <footer class="status">
    <span><svg viewBox="0 0 16 16"><path d="M2 2h8v8H2z" fill="#eee" stroke="#bbb"/><path d="M6 6h9v9H6z" fill="#000"/></svg></span>
    <span><svg viewBox="0 0 16 16"><path d="M3 3v10h12" fill="none" stroke="#222" stroke-width="1.500"/><path d="M4 8h4v4" fill="none" stroke="#1f9a2f" stroke-width="1.500"/></svg></span>
    <span>スナップ</span>
    <span>Meter</span>
    <span>グリッド</span>
    <span></span>
    <span>1</span>
    <span><svg viewBox="0 0 16 16"><path d="M2 6h9v8H2z" fill="none" stroke="#444" stroke-width="1.500"/><path d="M2 2h9M14 6v8" stroke="#1f9a2f" stroke-width="1.500"/></svg></span>
    <input type="checkbox" aria-label="ステータス">
  </footer>
  <div class="taskbar"><i class="pale"></i><i class="orange"></i></div>
</body>
</html>
```
FILE: styles.css
```css
* {
  margin: 0;
  padding: 0;
  box-sizing: border-box;
}

body {
  font-family: 'Liberation Sans', 'Noto Sans CJK JP', sans-serif;
  font-feature-settings: "palt";
  font-size: 15px;
  line-height: 18px;
  height: 100vh;
  display: flex;
  flex-direction: column;
  overflow: hidden;
  background: #efefef;
  color: #000;
}

button,
select {
  font: inherit;
  color: inherit;
  border: none;
  background: none;
  font-feature-settings: "palt";
  white-space: nowrap;
}

svg {
  display: block;
  flex: none;
}

.sprite {
  position: absolute;
  width: 0;
  height: 0;
}

.caret {
  border: 3px solid transparent;
  border-top: 4px solid #222;
  border-bottom: none;
  width: 6px;
  flex: none;
}

/* title bar */

.titlebar {
  height: 30px;
  flex: none;
  display: grid;
  grid-template-columns: 690px 1fr 270px;
  align-items: center;
  background: linear-gradient(#6e6e6e, #7b7b7b);
}

.quick {
  display: flex;
  align-items: center;
  padding-left: 1px;
  font-family: 'Open Sans', 'Noto Sans CJK JP', sans-serif;
}

.quick .logo {
  width: 20px;
  height: 14px;
}

.quick button {
  width: 19px;
  height: 20px;
  flex: none;
  display: flex;
  align-items: center;
  justify-content: center;
}

.quick button svg {
  width: 14px;
  height: 14px;
}

.quick .caret {
  margin: 0 1px;
}

.quick .light {
  border-top-color: #fff;
  margin-left: 5px;
}

.quick .sep {
  width: 2px;
  height: 12px;
  margin: 0 3px;
  background: #aaa;
}

.quick .filter-box {
  width: 74px;
  height: 23px;
  margin: 0 3px 0 6px;
  background: #b9b9b9;
  font-size: 16px;
}

.quick .on {
  background: #ffdc72;
  border: 1px solid #f7bd33;
}

.title {
  text-align: center;
  color: #d4d4d4;
  font-family: 'Noto Sans', sans-serif;
  font-size: 15px;
  padding-left: 188px;
}

.window-buttons {
  display: flex;
  justify-content: flex-end;
  gap: 17px;
  padding-right: 8px;
  color: #eee;
}

.window-buttons svg {
  width: 11px;
  height: 11px;
}

/* ribbon */

.tabs {
  height: 22px;
  flex: none;
  display: grid;
  grid-template-columns: 64px 100px 62px 62px 61px 46px 111px 74px 122px 126px 100px 124px 79px 1fr;
  padding-left: 3px;
  background: #636363;
  font-family: 'Noto Sans', 'Noto Sans CJK JP', sans-serif;
  font-size: 14px;
}

.tabs button {
  margin-right: 1px;
  border-radius: 3px 3px 0 0;
  background: linear-gradient(#a5a5a5, #868686);
}

.tabs .file {
  background: linear-gradient(#ffc61b, #f4a800);
  color: #fff;
}

.tabs .active {
  background: #dcdcdc;
}

.help {
  display: flex;
  justify-content: flex-end;
  align-items: center;
  gap: 14px;
  padding-right: 5px;
  color: #fff;
}

.help b {
  color: #f3dc1c;
}

.ribbon {
  height: 107px;
  flex: none;
  display: grid;
  grid-template-columns: 317fr 80fr 392fr 284fr 447fr 260fr 130fr 10fr;
  background: linear-gradient(#c4c4c4, #a4a4a4);
  border-top: 1px solid #d5d5d5;
  border-bottom: 3px solid #777;
  font-family: 'Noto Sans', 'Noto Sans CJK JP', sans-serif;
  font-size: 14px;
}

.group {
  display: flex;
  flex-direction: column;
  padding: 0 4px 0 3px;
  border-right: 1px solid #707070;
  box-shadow: inset -1px 0 #c8c8c8;
  min-width: 0;
}

.group h2 {
  height: 25px;
  line-height: 23px;
  background: #858585;
  color: #fff;
  font-size: 14px;
  font-weight: 400;
  text-align: center;
}

.tools {
  flex: 1;
  display: grid;
}

.col {
  display: flex;
  flex-direction: column;
  min-width: 0;
}

.col button {
  height: 26px;
  display: flex;
  align-items: center;
  gap: 4px;
}

.col .long {
  font-size: 13px;
}

.col svg {
  width: 14px;
  height: 14px;
}

.col .caret {
  margin-left: 1px;
}

.big {
  display: flex;
  flex-direction: column;
  align-items: center;
  align-self: start;
  gap: 6px;
  padding-top: 5px;
}

.big svg {
  width: 24px;
  height: 24px;
}

.g-cad .tools { grid-template-columns: 83px 55px 1fr; }
.g-layer .tools { grid-template-columns: 1fr; padding-left: 3px; }
.g-elev .tools { grid-template-columns: 47px 128px 142px 1fr; }
.g-surf .tools { grid-template-columns: 137px 1fr; padding-left: 5px; }
.g-line .tools { grid-template-columns: 126px 127px 70px 1fr; padding-left: 4px; }
.g-select .tools { grid-template-columns: 115px 1fr; padding-left: 4px; }
.g-view .tools { grid-template-columns: 1fr; padding-left: 4px; }

/* workspace */

.workspace {
  flex: 1;
  min-height: 0;
  display: grid;
  grid-template-columns: 187px 1fr 271px;
  gap: 4px;
  padding-top: 1px;
}

.workspace .properties {
  padding-left: 2px;
}

.panel-head {
  height: 20px;
  flex: none;
  display: flex;
  align-items: center;
  gap: 2px;
  padding: 0 3px 0 1px;
  background: linear-gradient(#a6a6a6, #c0c0c0);
}

.panel-head.light {
  background: linear-gradient(#c2c2c2, #e2e2e2);
}

.panel-head .ico {
  width: 14px;
  height: 14px;
}

.panel-title {
  flex: 1;
  font-size: 14px;
  white-space: nowrap;
}

.light .panel-title {
  padding-left: 12px;
  font-size: 15px;
}

.panel-head button {
  width: 18px;
  display: flex;
  justify-content: center;
}

.panel-head button svg {
  width: 10px;
  height: 11px;
}

.more {
  font-family: 'Noto Sans CJK JP', sans-serif;
  font-feature-settings: normal;
}

.explorer {
  background: #fff;
  font-family: 'Noto Sans CJK JP', sans-serif;
  font-weight: 350;
}

.tree {
  list-style: none;
  display: grid;
  grid-template-columns: minmax(0, 1fr);
  grid-auto-rows: 1fr;
  height: 455px;
  padding-right: 1px;
}

.tree li {
  display: flex;
  align-items: center;
  gap: 2px;
  line-height: 16px;
  white-space: nowrap;
}

.tree .long {
  font-size: 14px;
}

.tree svg {
  width: 14px;
  height: 14px;
}

.tree li::before {
  content: "";
  width: 6px;
  height: 6px;
  flex: none;
}

.tree .open::before {
  background: linear-gradient(135deg, transparent 50%, #333 50%);
}

.tree .shut::before {
  height: 8px;
  background: #777;
  clip-path: polygon(evenodd, 0 0, 80% 50%, 0 100%, 0 0, 15% 25%, 15% 75%, 60% 50%, 15% 25%);
}

.l0 { padding-left: 1px; }
.l1 { padding-left: 8px; }
.l2 { padding-left: 15px; }
.l3 { padding-left: 22px; }

.tree .selected {
  font-weight: 700;
  background: #fff9a8;
  border: 1px dotted #222;
  margin-left: 14px;
  padding-left: 0;
}

.documents {
  display: flex;
  flex-direction: column;
  min-width: 0;
}

.doc-tabs {
  height: 30px;
  flex: none;
  display: flex;
  padding: 3px 0 2px 4px;
  background: #fff;
  border-bottom: 2px solid #d5e2f2;
  color: #777;
  font-size: 16px;
  font-weight: 350;
}

.doc-tabs button {
  display: flex;
  align-items: center;
  justify-content: space-between;
  padding-right: 9px;
  border-right: 1px solid #111;
  background: linear-gradient(#fff, #dce6f0);
}

.doc-tabs svg {
  width: 10px;
  height: 10px;
}

.w-start { width: 111px; }
.doc-tabs .w-plan { width: 165px; border-right: none; }
.w-3d { width: 166px; }
.w-plan2 { width: 172px; }

.doc-tabs .active {
  background: linear-gradient(#c8dcf2, #9dbbdb);
  color: #111;
}

.canvas {
  flex: 1;
  min-height: 0;
  width: 100%;
  background: #000;
}

.wire path {
  fill: none;
  stroke: #d0a9c6;
}

.wire .thick {
  stroke-width: 2;
}

.vertex {
  fill: none;
  stroke: #e4c6e4;
}

.marker {
  fill: none;
  stroke: #e8e8e8;
}

.faint {
  fill: none;
  stroke: #0fd80f;
}

.axis {
  font-size: 14px;
}

.scale {
  font-size: 17px;
  fill: #fff;
}

/* properties */

.properties {
  display: flex;
  flex-direction: column;
  min-width: 0;
  font-family: 'Noto Sans CJK JP', sans-serif;
  font-weight: 350;
}

.prop-bar {
  height: 21px;
  flex: none;
  background: #656565;
}

.prop-tools {
  display: flex;
  align-items: center;
  width: 142px;
  height: 20px;
  padding-left: 3px;
  background: linear-gradient(#b7b7b7, #9b9b9b);
}

.prop-tools button {
  width: 20px;
  display: flex;
  justify-content: center;
}

.prop-tools svg {
  width: 13px;
  height: 13px;
}

.grip {
  height: 14px;
  border-left: 2px dotted #222;
  margin-right: 6px;
}

.gap {
  width: 20px;
  height: 12px;
  border-right: 1px solid #444;
}

.object {
  height: 39px;
  flex: none;
  display: flex;
  gap: 16px;
  line-height: 16px;
  background: #f0f0f0;
}

.thumb {
  width: 47px;
  background: #fff;
  display: flex;
  align-items: center;
  justify-content: center;
}

.thumb svg {
  width: 18px;
  height: 14px;
}

.object-select,
.edit select {
  appearance: none;
  background: #e2e2e2 url("data:image/svg+xml,%3Csvg xmlns='http://www.w3.org/2000/svg' viewBox='0 0 12 12'%3E%3Cpath d='M1 4l5 5 5-5' fill='none' stroke='%23444'/%3E%3C/svg%3E") no-repeat right 6px center / 11px 11px;
}

.object-select {
  height: 24px;
  flex: none;
  padding: 0 3px;
  border: 1px solid #bbb;
  border-bottom: 2px solid #8c8c3a;
}

.prop-scroll {
  display: flex;
  flex: none;
  height: 808px;
  border-bottom: 1px solid #aaa;
}

.prop-list {
  flex: 1;
  min-width: 0;
  background: #f5f5d8;
  border-left: 2px solid #c3c287;
  overflow: hidden;
}

.prop-list table {
  width: calc(100% - 5px);
  margin-left: 5px;
  table-layout: fixed;
  border-collapse: collapse;
}

.prop-list tr {
  height: 24px;
}

.prop-list .short {
  height: 23px;
}

.prop-list th {
  width: 119px;
  padding-left: 5px;
  line-height: 18px;
  font-weight: 350;
  text-align: left;
  vertical-align: top;
  background: #f4f4f4;
  white-space: nowrap;
  overflow: hidden;
  border: 1px solid #dcdcdc;
  border-left: none;
}

.prop-list td {
  padding-left: 3px;
  line-height: 20px;
  color: #0a0af0;
  background: #fff;
  white-space: nowrap;
  overflow: hidden;
  border: 1px solid #dcdcdc;
  border-right: none;
}

.prop-list .short td {
  padding-left: 1px;
  line-height: 18px;
}

.prop-list tr:nth-child(even) td {
  background: #efefef;
}

.prop-list .off th,
.prop-list .off td {
  color: #999;
}

.prop-list .changed td {
  font-weight: 700;
}

.swatch {
  display: inline-block;
  width: 19px;
  height: 15px;
  margin: 0 10px 0 -2px;
  vertical-align: middle;
  background: #0f0;
  border: 1px solid #222;
}

.prop-list .edit {
  padding: 0;
}

.edit select {
  width: 100%;
  height: 23px;
  display: block;
  padding-left: 3px;
  color: #222;
  border: 1px solid #999;
}

.prop-list h3 {
  height: 24px;
  margin: 4px 0;
  padding-left: 3px;
  display: flex;
  align-items: center;
  gap: 6px;
  font-size: 15px;
  font-weight: 500;
  background: linear-gradient(#dedede, #8f8f8f);
}

.prop-list .last {
  height: 20px;
  margin-bottom: 0;
}

.prop-list h3 i {
  width: 8px;
  height: 8px;
  margin-top: 5px;
  line-height: 6px;
  font-style: normal;
  text-align: center;
  background: #fff;
}

.scrollbar {
  width: 24px;
  display: flex;
  flex-direction: column;
  align-items: center;
  padding: 10px 0 8px 2px;
  background: #f0f0f0;
}

.up,
.down {
  border: 5px solid transparent;
}

.up {
  border-bottom: 6px solid #2c3556;
  border-top: none;
}

.down {
  border-top: 6px solid #2c3556;
  border-bottom: none;
}

.bar {
  flex: 1;
  width: 100%;
  padding-top: 28px;
}

.handle {
  height: 60%;
  display: flex;
  align-items: center;
  justify-content: center;
  font-size: 9px;
  background: linear-gradient(90deg, #e2e2e4, #b9b9bd);
  border: 1px solid #a5a5a8;
}

.describe {
  flex: 1;
  min-height: 0;
  margin-top: 7px;
  padding: 2px 3px;
  background: #f0f0f0;
  border: 1px solid #dde6ec;
}

.describe h4 {
  font-size: 14px;
  font-weight: 500;
  margin-bottom: 18px;
}

.describe p {
  font-size: 14px;
  white-space: nowrap;
}

.actions {
  height: 40px;
  flex: none;
  display: flex;
  justify-content: flex-end;
  align-items: center;
  padding-right: 4px;
  background: #e2e2e2;
}

.actions button {
  width: 116px;
  height: 27px;
  background: #e1e1e1;
  border: 1px solid #adadad;
}

/* status bar */

.status {
  height: 23px;
  flex: none;
  display: grid;
  grid-template-columns: 1fr 18px 20px 56px 50px 53px 19px 18px 18px 270px 15px;
  align-items: center;
  padding-right: 2px;
  font-family: 'Noto Sans CJK JP', sans-serif;
  font-weight: 350;
  white-space: nowrap;
  background: #f0f0f0;
}

.status::before {
  content: "";
}

.status span {
  height: 20px;
  display: flex;
  align-items: center;
  justify-content: center;
  border-left: 1px solid #dcdcdc;
}

.status svg {
  width: 13px;
  height: 13px;
}

.status input {
  grid-column: 11;
  width: 14px;
  height: 14px;
  appearance: none;
  background: #fff;
  border: 1px solid #333;
}

.taskbar {
  height: 2px;
  flex: none;
  display: flex;
  gap: 306px;
  padding-left: 48px;
  background: #000;
}

.pale {
  width: 344px;
  background: #bbb;
}

.orange {
  width: 48px;
  background: #e08a3c;
}
```
